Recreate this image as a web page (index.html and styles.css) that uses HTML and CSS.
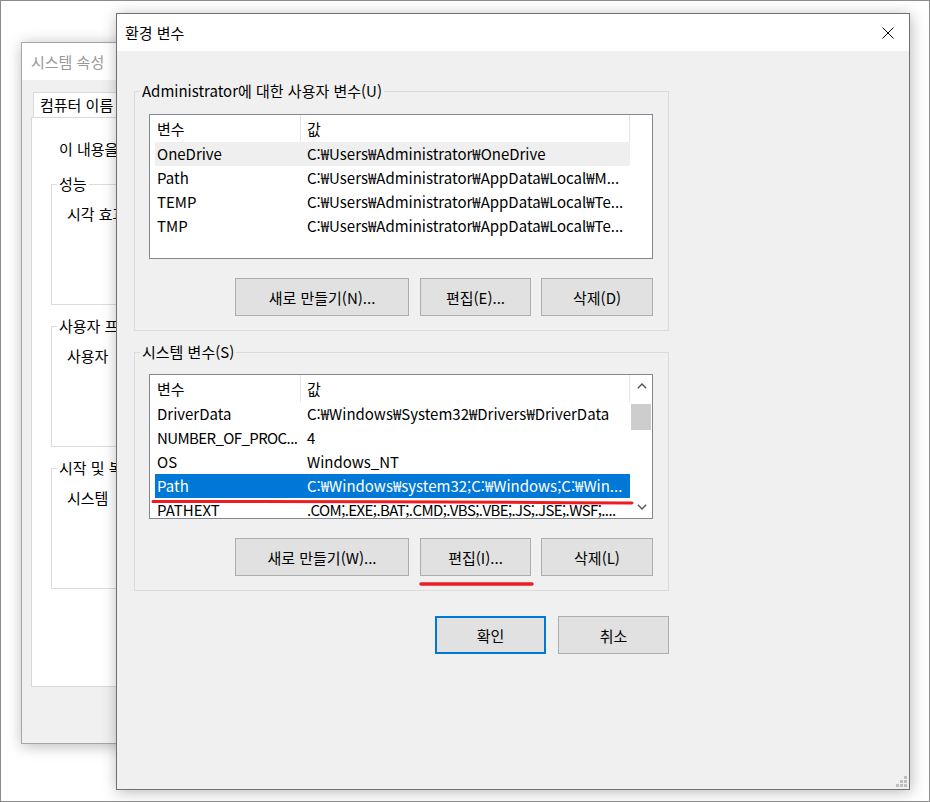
FILE: index.html
```html
<!DOCTYPE html>
<html lang="ko">
<head>
    <meta charset="UTF-8">
    <title>환경 변수</title>
    <link rel="stylesheet" href="styles.css">
</head>
<body>
    <!-- System Properties window (behind) -->
    <div class="window back-window">
        <div class="titlebar inactive">시스템 속성</div>
        <div class="back-body">
            <div class="tabs"><span class="tab">컴퓨터 이름</span></div>
            <div class="tab-panel">
                <p class="intro">이 내용을</p>
                <fieldset class="old-group">
                    <legend>성능</legend>
                    <p>시각 효과</p>
                </fieldset>
                <fieldset class="old-group">
                    <legend>사용자 프로필</legend>
                    <p>사용자</p>
                </fieldset>
                <fieldset class="old-group">
                    <legend>시작 및 복구</legend>
                    <p>시스템</p>
                </fieldset>
            </div>
        </div>
    </div>

    <!-- Environment Variables dialog -->
    <div class="window dialog">
        <div class="titlebar">
            <span>환경 변수</span>
            <svg class="close" width="12" height="12" viewBox="0 0 12 12">
                <path d="M0.5 0.5 L11.5 11.5 M11.5 0.5 L0.5 11.5" stroke="#000" stroke-width="1" fill="none"/>
            </svg>
        </div>
        <div class="dialog-body">
            <fieldset class="group">
                <legend>Administrator에 대한 사용자 변수(U)</legend>
                <div class="group-inner first">
                    <div class="list">
                        <div class="list-content">
                            <div class="list-header">
                                <span class="hcell name">변수</span>
                                <span class="hcell value">값</span>
                            </div>
                            <div class="row hover"><span class="cell name">OneDrive</span><span class="cell value">C:₩Users₩Administrator₩OneDrive</span></div>
                            <div class="row"><span class="cell name">Path</span><span class="cell value">C:₩Users₩Administrator₩AppData₩Local₩M...</span></div>
                            <div class="row"><span class="cell name">TEMP</span><span class="cell value">C:₩Users₩Administrator₩AppData₩Local₩Te...</span></div>
                            <div class="row"><span class="cell name">TMP</span><span class="cell value">C:₩Users₩Administrator₩AppData₩Local₩Te...</span></div>
                        </div>
                    </div>
                    <div class="btn-row">
                        <button class="btn wide">새로 만들기(N)...</button>
                        <button class="btn">편집(E)...</button>
                        <button class="btn last">삭제(D)</button>
                    </div>
                </div>
            </fieldset>

            <fieldset class="group second">
                <legend>시스템 변수(S)</legend>
                <div class="group-inner">
                    <div class="list">
                        <div class="list-content">
                            <div class="list-header">
                                <span class="hcell name">변수</span>
                                <span class="hcell value">값</span>
                            </div>
                            <div class="row"><span class="cell name">DriverData</span><span class="cell value">C:₩Windows₩System32₩Drivers₩DriverData</span></div>
                            <div class="row"><span class="cell name tight">NUMBER_OF_PROC...</span><span class="cell value">4</span></div>
                            <div class="row"><span class="cell name">OS</span><span class="cell value">Windows_NT</span></div>
                            <div class="row selected"><span class="cell name">Path</span><span class="cell value">C:₩Windows₩system32;C:₩Windows;C:₩Win...</span></div>
                            <div class="row"><span class="cell name">PATHEXT</span><span class="cell value tight">.COM;.EXE;.BAT;.CMD;.VBS;.VBE;.JS;.JSE;.WSF;....</span></div>
                        </div>
                        <div class="scrollbar">
                            <div class="arrow">
                                <svg width="10" height="6" viewBox="0 0 10 6"><path d="M0.8 5.2 L5 1 L9.2 5.2" stroke="#555" stroke-width="1.4" fill="none"/></svg>
                            </div>
                            <div class="track"><div class="thumb"></div></div>
                            <div class="arrow">
                                <svg width="10" height="6" viewBox="0 0 10 6"><path d="M0.8 0.8 L5 5 L9.2 0.8" stroke="#555" stroke-width="1.4" fill="none"/></svg>
                            </div>
                        </div>
                    </div>
                    <div class="btn-row">
                        <button class="btn wide">새로 만들기(W)...</button>
                        <button class="btn">편집(I)...</button>
                        <button class="btn last">삭제(L)</button>
                    </div>
                </div>
            </fieldset>

            <div class="footer">
                <button class="btn default">확인</button>
                <button class="btn">취소</button>
            </div>
        </div>

        <!-- red annotation marks -->
        <svg class="mark mark-path" width="484" height="8" viewBox="0 0 484 8">
            <path d="M2 3.5 Q 240 3 481 5" stroke="#ed1c24" stroke-width="3" stroke-linecap="round" fill="none"/>
        </svg>
        <svg class="mark mark-edit" width="116" height="8" viewBox="0 0 116 8">
            <path d="M2 4 L113 4" stroke="#ed1c24" stroke-width="3.5" stroke-linecap="round" fill="none"/>
        </svg>

        <svg class="grip" width="11" height="11" viewBox="0 0 11 11">
            <rect x="8" y="0" width="3" height="3" fill="#bfbfbf"/>
            <rect x="4" y="4" width="3" height="3" fill="#bfbfbf"/>
            <rect x="8" y="4" width="3" height="3" fill="#bfbfbf"/>
            <rect x="0" y="8" width="3" height="3" fill="#bfbfbf"/>
            <rect x="4" y="8" width="3" height="3" fill="#bfbfbf"/>
            <rect x="8" y="8" width="3" height="3" fill="#bfbfbf"/>
        </svg>
    </div>
</body>
</html>
```

FILE: styles.css
```css
* {
    box-sizing: border-box;
}
body {
    margin: 0;
    width: 930px;
    height: 802px;
    border: 1px solid #8c8c8c;
    background-color: #fff;
    font-family: "Noto Sans CJK KR", "Noto Sans", sans-serif;
    font-size: 15px;
    color: #000;
    position: relative;
    overflow: hidden;
}
p {
    margin: 0;
}

/* windows */
.window {
    position: absolute;
    background-color: #f0f0f0;
    box-shadow: 1px 2px 14px rgba(0, 0, 0, 0.28);
    overflow: hidden;
}
.back-window {
    left: 20px;
    top: 41px;
    width: 400px;
    height: 702px;
    border: 1px solid #a6a6a6;
}
.dialog {
    left: 115px;
    top: 12px;
    width: 794px;
    height: 777px;
    border: 1px solid #707070;
}
.titlebar {
    height: 37px;
    background-color: #fff;
    display: flex;
    align-items: center;
    justify-content: space-between;
    padding: 0 15px 0 8px;
    line-height: 20px;
}
.titlebar.inactive {
    color: #999;
    padding-left: 9px;
}

/* back window contents */
.back-body {
    padding: 12px 0 0 9px;
}
.tabs {
    display: flex;
    padding-left: 2px;
}
.tab {
    height: 25px;
    line-height: 24px;
    padding: 0 8px 0 6px;
    background-color: #fff;
    border: 1px solid #d9d9d9;
    border-bottom: none;
    white-space: nowrap;
}
.tab-panel {
    width: 420px;
    height: 570px;
    background-color: #fff;
    border: 1px solid #d9d9d9;
    padding: 21px 0 0 19px;
}
.intro {
    line-height: 20px;
    padding-left: 8px;
    white-space: nowrap;
}
.old-group {
    margin: 15px 0 0 0;
    padding: 0;
    width: 360px;
    height: 131px;
    border: 1px solid #dcdcdc;
}
.old-group + .old-group {
    margin-top: 11px;
}
.old-group legend {
    margin-left: 5px;
    padding: 0 2px;
    line-height: 20px;
}
.old-group p {
    padding: 10px 0 0 15px;
    line-height: 20px;
    white-space: nowrap;
}

/* dialog contents */
.dialog-body {
    padding: 30px 0 0 17px;
}
.group {
    margin: 0;
    padding: 0;
    width: 535px;
    border: 1px solid #dcdcdc;
}
.group.second {
    margin-top: 11px;
}
.group legend {
    margin-left: 5px;
    padding: 0 2px;
    line-height: 20px;
}
.group-inner {
    padding: 12px 15px 14px 14px;
}
.group-inner.first {
    padding-top: 13px;
}
.list {
    width: 504px;
    height: 145px;
    border: 1px solid #828790;
    background-color: #fff;
    display: flex;
    overflow: hidden;
}
.list-content {
    width: 481px;
}
.list-header {
    display: flex;
    height: 27px;
    line-height: 27px;
}
.hcell {
    border-right: 1px solid #e5e5e5;
    white-space: nowrap;
}
.hcell.name {
    width: 151px;
    padding-left: 7px;
}
.hcell.value {
    width: 329px;
    padding-left: 6px;
}
.row {
    display: flex;
    margin-left: 5px;
    width: 475px;
    height: 24px;
    line-height: 24px;
    white-space: nowrap;
}
.row.hover {
    background-color: #efefef;
}
.row.selected {
    background-color: #0078d7;
    color: #fff;
}
.cell {
    overflow: hidden;
}
.cell.name {
    width: 145px;
    flex-shrink: 0;
    padding-left: 2px;
}
.cell.value {
    padding-left: 7px;
}
.cell.tight {
    letter-spacing: -0.6px;
}

/* scrollbar */
.scrollbar {
    width: 21px;
    display: flex;
    flex-direction: column;
    background-color: #fff;
}
.arrow {
    height: 22px;
    display: flex;
    align-items: center;
    justify-content: center;
}
.track {
    flex: 1;
}
.thumb {
    margin: 7px 1px 0 0;
    height: 26px;
    background-color: #cdcdcd;
}

/* buttons */
.btn-row {
    display: flex;
    justify-content: flex-end;
    gap: 10px;
    margin-top: 19px;
}
.btn {
    height: 38px;
    width: 111px;
    padding: 0;
    background-color: #e1e1e1;
    border: 1px solid #adadad;
    font-family: inherit;
    font-size: 15px;
    color: #000;
}
.btn.wide {
    width: 174px;
    margin-right: 1px;
}
.btn.last {
    width: 112px;
}
.btn.default {
    border: 2px solid #0078d7;
}
.footer {
    width: 535px;
    display: flex;
    justify-content: flex-end;
    gap: 12px;
    margin-top: 25px;
}

/* overlays */
.mark {
    position: absolute;
}
.mark-path {
    left: 34px;
    top: 484px;
}
.mark-edit {
    left: 302px;
    top: 566px;
}
.grip {
    position: absolute;
    right: 2px;
    bottom: 2px;
}
```
